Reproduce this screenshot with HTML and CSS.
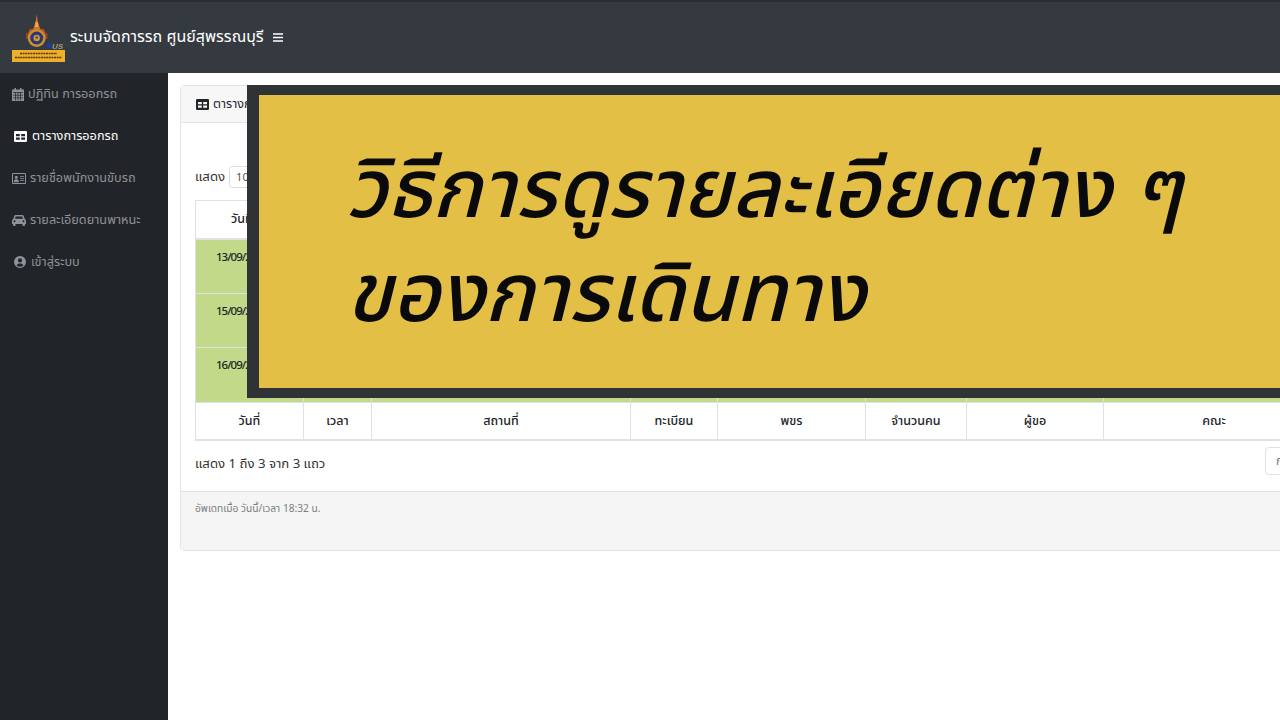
FILE: index.html
```html
<!DOCTYPE html>
<html lang="th">
<head>
<meta charset="utf-8">
<title>ระบบจัดการรถ ศูนย์สุพรรณบุรี</title>
<link rel="stylesheet" href="styles.css">
</head>
<body>
<header class="topbar">
  <svg class="logo" viewBox="0 0 54 48" width="54" height="48">
    <path d="M24.700 0l1 7 1.800 6 1.500 3h-8.600l1.500-3 1.800-6z" fill="#d8702a"/>
    <path d="M23.700 8h2l.6 5h-3.200z" fill="#e8b050"/>
    <path d="M18 15h13.500l3 5.500H15z" fill="#b8502a"/>
    <path d="M14 19h21.500v6H14z" fill="#9a3f2a"/>
    <circle cx="24.700" cy="24" r="9" fill="#c9922e"/>
    <circle cx="24.700" cy="24" r="6.500" fill="#33337a"/>
    <circle cx="24.700" cy="24" r="3.200" fill="#b9a040"/>
    <circle cx="24.700" cy="23.500" r="1.300" fill="#8a3a28"/>
    <circle cx="37" cy="31.500" r="2.600" fill="#1f3aa8"/>
    <rect y="36" width="53" height="12" fill="#eeb02a"/>
    <path d="M8 39.500h37M3 43.500h47" stroke="#5a3a10" stroke-width="1.600" stroke-dasharray="2 .6"/>
  </svg>
  <span class="logo-us">US</span>
  <span class="brand">ระบบจัดการรถ ศูนย์สุพรรณบุรี</span>
  <svg class="menu-icon" viewBox="0 0 10 9" width="10" height="9"><path d="M0 1h10M0 4.500h10M0 8h10" stroke="#fff" stroke-width="1.500"/></svg>
</header>
<div class="layout">
  <nav class="sidebar">
    <a class="nav-item"><svg class="ico" viewBox="0 0 12 13" width="12" height="13"><path d="M2.500 0h1.500v1.500h4V0h1.500v1.500H12V13H0V1.500h2.500z" fill="currentColor"/><path d="M1 4.500h10M1 7.200h10M1 9.900h10M3.500 4v8.500M6 4v8.500M8.500 4v8.500" stroke="#212529" stroke-width=".7"/></svg>ปฏิทิน การออกรถ</a>
    <a class="nav-item active"><svg class="ico wide" viewBox="0 0 13 11" width="13" height="11"><path d="M1.200 0h10.600A1.200 1.200 0 0 1 13 1.200v8.600a1.200 1.200 0 0 1-1.200 1.200H1.200A1.200 1.200 0 0 1 0 9.800V1.200A1.200 1.200 0 0 1 1.200 0zM2 3v2.200h3.800V3zm5.200 0v2.200H11V3zM2 6.600v2.200h3.800V6.600zm5.200 0v2.200H11V6.600z" fill="currentColor" fill-rule="evenodd"/></svg>ตารางการออกรถ</a>
    <a class="nav-item"><svg class="ico" viewBox="0 0 14 11" width="14" height="11"><path d="M1 0h12a1 1 0 0 1 1 1v9a1 1 0 0 1-1 1H1a1 1 0 0 1-1-1V1a1 1 0 0 1 1-1zm0 1v9h12V1z" fill="currentColor" fill-rule="evenodd"/><circle cx="4.300" cy="4.200" r="1.500" fill="currentColor"/><path d="M2 8.800c0-3 4.600-3 4.600 0zM8 3.500h4M8 5.500h4M8 7.500h4" fill="currentColor" stroke="currentColor" stroke-width=".8"/></svg>รายชื่อพนักงานขับรถ</a>
    <a class="nav-item"><svg class="ico" viewBox="0 0 14 11" width="14" height="11"><path d="M3.500 0h7c.6 0 1 .4 1.200.9L12.800 4c.7.300 1.200 1 1.200 1.800V9h-1v1.200a.8.800 0 0 1-.8.800h-.9a.8.800 0 0 1-.8-.8V9H3.500v1.200a.8.800 0 0 1-.8.800h-.9a.8.800 0 0 1-.8-.8V9H0V5.800C0 5 .5 4.300 1.200 4L2.300.9C2.500.4 2.900 0 3.500 0zm.2 1.500L3 3.800h8l-.7-2.300zM2.500 5.200a1 1 0 1 0 0 2 1 1 0 0 0 0-2zm9 0a1 1 0 1 0 0 2 1 1 0 0 0 0-2z" fill="currentColor" fill-rule="evenodd"/></svg>รายละเอียดยานพาหนะ</a>
    <a class="nav-item item-login"><svg class="ico" viewBox="0 0 12 12" width="12" height="12"><path d="M6 0a6 6 0 1 1 0 12A6 6 0 0 1 6 0zm0 2.300a2.100 2.100 0 1 0 0 4.200 2.100 2.100 0 0 0 0-4.200zM2.600 9.300a4.500 4.500 0 0 0 6.800 0C8.800 8 7.500 7.400 6 7.400S3.200 8 2.600 9.300z" fill="currentColor" fill-rule="evenodd"/></svg>เข้าสู่ระบบ</a>
  </nav>
  <main class="content">
    <section class="card">
      <div class="card-header"><svg class="ico-dark" viewBox="0 0 13 11" width="13" height="11"><path d="M1.200 0h10.600A1.200 1.200 0 0 1 13 1.200v8.600a1.200 1.200 0 0 1-1.200 1.200H1.200A1.200 1.200 0 0 1 0 9.800V1.200A1.200 1.200 0 0 1 1.200 0zM2 3v2.200h3.800V3zm5.200 0v2.200H11V3zM2 6.600v2.200h3.800V6.600zm5.200 0v2.200H11V6.600z" fill="currentColor" fill-rule="evenodd"/></svg>ตารางการออกรถ</div>
      <div class="card-body">
        <div class="length">แสดง <span class="select">10</span></div>
        <table class="data">
          <colgroup><col class="c1"><col class="c2"><col class="c3"><col class="c4"><col class="c5"><col class="c6"><col class="c7"><col class="c8"></colgroup>
          <thead><tr><th class="sort-head">วันที่</th><th></th><th></th><th></th><th></th><th></th><th></th><th></th></tr></thead>
          <tbody>
            <tr><td class="date">13/09/2</td><td></td><td></td><td></td><td></td><td></td><td></td><td></td></tr>
            <tr><td class="date">15/09/2</td><td></td><td></td><td></td><td></td><td></td><td></td><td></td></tr>
            <tr><td class="date">16/09/2</td><td></td><td></td><td></td><td></td><td></td><td></td><td></td></tr>
          </tbody>
          <tfoot><tr><th>วันที่</th><th>เวลา</th><th>สถานที่</th><th>ทะเบียน</th><th>พขร</th><th>จำนวนคน</th><th>ผู้ขอ</th><th>คณะ</th></tr></tfoot>
        </table>
        <div class="table-info"><span class="info-text">แสดง 1 ถึง 3 จาก 3 แถว</span><span class="pager">ก่อนหน้า</span></div>
      </div>
      <div class="card-footer">อัพเดทเมื่อ วันนี้/เวลา 18:32 น.</div>
    </section>
  </main>
</div>
<aside class="banner"><h1>วิธีการดูรายละเอียดต่าง ๆ<br>ของการเดินทาง</h1></aside>
</body>
</html>
```
FILE: styles.css
```css
* { box-sizing: border-box; }
html, body { margin: 0; height: 720px; overflow: hidden; }
body { font-family: "Noto Sans Thai", "Kanit", "Prompt", "Noto Sans", "Liberation Sans", sans-serif; font-size: 13.200px; color: #212529; background: #fff; }
.topbar { height: 73px; display: flex; align-items: center; padding: 0 12px; background: #343a40; border-top: 2px solid #2b2e31; position: relative; }
.logo { flex: none; }
.logo-us { position: absolute; left: 52px; top: 40px; font: italic bold 8px "Liberation Sans", sans-serif; color: #a89a70; }
.brand { margin-left: 4px; margin-top: -2px; color: #fff; font-size: 16px; }
.menu-icon { margin-left: 9px; }
.layout { display: flex; height: 647px; }
.sidebar { width: 168px; flex: none; background: #212529; display: flex; flex-direction: column; }
.nav-item { height: 42px; display: flex; align-items: center; gap: 4px; padding-left: 12px; color: #8f9296; font-size: 12.700px; }
.nav-item.active { color: #fff; }
.ico.wide { margin-left: 2px; margin-right: 1px; }
.item-login .ico { margin-left: 2px; margin-right: 1px; }
.content { flex: 1; min-width: 0; padding: 12px; }
.card { width: 1120px; height: 466px; border: 1px solid #e2e3e5; border-radius: 4px; display: flex; flex-direction: column; }
.card-header { height: 37px; background: #f7f7f7; border-bottom: 1px solid #e5e5e5; display: flex; align-items: center; gap: 4px; padding-left: 15px; font-size: 12.500px; }
.ico-dark { color: #212529; }
.card-body { flex: 1; padding: 41px 14px 0; }
.length { display: flex; align-items: center; gap: 4px; height: 26px; color: #333; }
.select { width: 60px; height: 22px; border: 1px solid #ddd; border-radius: 3px; padding: 2px 6px; font-size: 11px; color: #555; }
.data { margin-top: 10px; width: 1129px; table-layout: fixed; border-collapse: collapse; }
.c1 { width: 108px; } .c2 { width: 68px; } .c3 { width: 259px; } .c4 { width: 87px; } .c5 { width: 148px; } .c6 { width: 101px; } .c7 { width: 137px; } .c8 { width: 221px; }
.data th, .data td { border: 1px solid #dee2e6; text-align: center; font-size: 12.500px; font-weight: 500; }
.data thead th { height: 38px; border-width: 1px 1px 2px; }
.data tfoot th { height: 38px; border-width: 1px 1px 2px; }
.data .sort-head { padding-right: 16px; }
.data td { height: 54.670px; background: #c3d98a; vertical-align: top; padding-top: 8px; }
.data .date { text-align: left; padding-left: 20px; padding-top: 9px; font-size: 11.500px; letter-spacing: -1px; }
.table-info { display: flex; justify-content: space-between; align-items: flex-start; margin-top: 6px; width: 1130px; color: #333; }
.info-text { margin-top: 7px; }
.pager { width: 70px; height: 28px; border: 1px solid #dee2e6; border-radius: 4px; padding: 4px 10px; color: #777; font-size: 12px; white-space: nowrap; margin-right: -10px; }
.card-footer { height: 59px; background: #f5f5f5; border-top: 1px solid #e0e0e0; padding: 9px 14px; font-size: 10.200px; color: #7b7f83; }
.banner { position: absolute; left: 247px; top: 85px; width: 1100px; height: 313px; background: #e4bf45; border: solid #2f3335; border-width: 10px 12px; padding: 45px 0 0 87px; }
.banner h1 { margin: 0; font-size: 82px; line-height: 104px; font-weight: 500; font-style: italic; color: #0a0a0a; white-space: nowrap; }
```
